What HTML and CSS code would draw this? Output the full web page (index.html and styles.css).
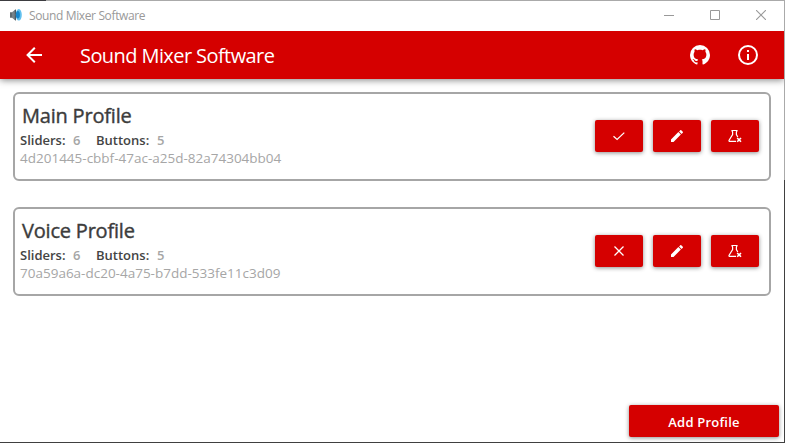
FILE: index.html
```
<!DOCTYPE html>
<html lang="en">
<head>
<meta charset="utf-8">
<title>Sound Mixer Software</title>
<link rel="stylesheet" href="styles.css">
</head>
<body>
<svg width="0" height="0" class="defs">
  <symbol id="check" viewBox="0 0 14 14"><path d="M1.500 7.300 L5.100 10.500 L12.300 3.600" fill="none" stroke="currentColor" stroke-width="1.250"/></symbol>
  <symbol id="close" viewBox="0 0 14 14"><path d="M2.500 2.500l9 9M11.500 2.500l-9 9" stroke="currentColor" stroke-width="1.300"/></symbol>
  <symbol id="pencil" viewBox="0 0 24 24"><path d="M20.710 7.040c.39-.39.39-1.040 0-1.410l-2.340-2.340c-.37-.39-1.020-.39-1.410 0l-1.840 1.830 3.750 3.750M3 17.250V21h3.750L17.810 9.930l-3.750-3.750L3 17.250z" fill="currentColor"/></symbol>
  <symbol id="flask" viewBox="0 0 14 14"><path d="M8 12.400H2q-1.400 0-.9-1.200L4.600 5.500V3L4 1.900v-.4h5v.4L8.400 3v2.500L9.800 8" fill="none" stroke="currentColor" stroke-width="1.200"/><path d="M9.200 9l3.800 3.800M13 9l-3.800 3.800" stroke="currentColor" stroke-width="1.600"/></symbol>
</svg>
<div class="window">
  <div class="titlebar">
    <svg class="logo" width="14" height="14" viewBox="0 0 14 14"><path d="M1 4.200h2v5.600H1z" fill="#606a70"/><path d="M3 4.200 7 1v12L3 9.800z" fill="#76838a"/><path d="M5.800 2H7v10H5.800z" fill="#4b5a63"/><ellipse cx="9.800" cy="6.800" rx="3" ry="5.800" fill="#62c0ee"/><ellipse cx="8.900" cy="6.800" rx="2" ry="3.800" fill="#1686cc"/></svg>
    <span class="caption">Sound Mixer Software</span>
    <div class="controls">
      <svg width="10" height="11" viewBox="0 0 10 11"><path d="M0 5h10" stroke="#999" shape-rendering="crispEdges"/></svg>
      <svg width="10" height="10" viewBox="0 0 10 10"><path d="M.5.5h9v9h-9z" fill="none" stroke="#999"/></svg>
      <svg width="10" height="10" viewBox="0 0 10 10"><path d="M0 0l10 10M10 0L0 10" stroke="#999" stroke-width="1.100"/></svg>
    </div>
  </div>
  <header class="appbar">
    <svg class="back" width="24" height="24" viewBox="0 0 24 24"><path d="M20 11v2H8l5.500 5.500-1.420 1.420L4.160 12l7.920-7.920L13.500 5.500 8 11z" fill="#fff"/></svg>
    <h1>Sound Mixer Software</h1>
    <svg class="github" width="24" height="24" viewBox="0 0 24 24"><path d="M12 2A10 10 0 0 0 2 12c0 4.420 2.870 8.170 6.840 9.500.5.080.66-.23.660-.5v-1.690c-2.770.6-3.360-1.340-3.360-1.340-.46-1.160-1.110-1.470-1.110-1.470-.91-.62.070-.6.070-.6 1 .07 1.530 1.030 1.530 1.030.87 1.520 2.340 1.070 2.910.83.090-.65.350-1.090.63-1.340-2.220-.25-4.550-1.110-4.550-4.920 0-1.110.38-2 1.030-2.710-.1-.25-.45-1.290.1-2.640 0 0 .84-.27 2.750 1.020.79-.22 1.650-.33 2.500-.33s1.710.11 2.500.33c1.910-1.290 2.750-1.020 2.750-1.020.55 1.350.2 2.390.1 2.640.65.710 1.030 1.600 1.030 2.710 0 3.820-2.340 4.660-4.570 4.910.36.310.69.920.69 1.850V21c0 .27.160.59.670.5C19.140 20.160 22 16.420 22 12A10 10 0 0 0 12 2" fill="#fff"/></svg>
    <svg width="24" height="24" viewBox="0 0 24 24"><circle cx="12" cy="12" r="9" fill="none" stroke="#fff" stroke-width="2"/><path d="M11 7h2v2h-2zM11 11h2v6h-2z" fill="#fff"/></svg>
  </header>
  <main>
    <section class="card">
      <div class="info">
        <h2>Main Profile</h2>
        <div class="stats"><b>Sliders:</b><i>6</i><b class="buttons">Buttons:</b><i>5</i></div>
        <div class="uuid">4d201445-cbbf-47ac-a25d-82a74304bb04</div>
      </div>
      <div class="actions">
        <button aria-label="Selected"><svg width="14" height="14"><use href="#check"/></svg></button>
        <button aria-label="Edit"><svg width="16" height="16"><use href="#pencil"/></svg></button>
        <button aria-label="Remove"><svg width="14" height="14"><use href="#flask"/></svg></button>
      </div>
    </section>
    <section class="card">
      <div class="info">
        <h2>Voice Profile</h2>
        <div class="stats"><b>Sliders:</b><i>6</i><b class="buttons">Buttons:</b><i>5</i></div>
        <div class="uuid">70a59a6a-dc20-4a75-b7dd-533fe11c3d09</div>
      </div>
      <div class="actions">
        <button aria-label="Select"><svg width="14" height="14"><use href="#close"/></svg></button>
        <button aria-label="Edit"><svg width="16" height="16"><use href="#pencil"/></svg></button>
        <button aria-label="Remove"><svg width="14" height="14"><use href="#flask"/></svg></button>
      </div>
    </section>
  </main>
  <footer><button class="add">Add Profile</button></footer>
</div>
</body>
</html>
```
FILE: styles.css
```
* { box-sizing: border-box; }
body { margin: 0; font-family: "Open Sans", "Noto Sans", sans-serif; background: #fff; overflow: hidden; }
svg { display: block; flex: none; }
.defs { position: absolute; }
.window {
  width: 785px; height: 443px; display: flex; flex-direction: column;
  padding: 1px 1px 1px 0;
  background:
    linear-gradient(#3c3c40, #3c3c40) 0 0 / 46px 1px no-repeat,
    linear-gradient(#aaa, #aaa) 0 0 / 100% 1px no-repeat,
    linear-gradient(#404040, #404040) 0 100% / 100% 1px no-repeat,
    linear-gradient(#aaa 180px, #404040 180px) 100% 0 / 1px 100% no-repeat,
    #fff;
}
.titlebar { height: 30px; display: flex; align-items: center; padding: 0 18px 0 9px; flex: none; }
.logo { margin-top: -2px; }
.caption { margin-left: 6px; font-size: 12px; line-height: 16px; color: #999; letter-spacing: -.37px; white-space: nowrap; }
.controls { margin-left: auto; display: flex; gap: 36px; align-items: center; height: 10px; margin-top: -2px; }
.appbar {
  height: 48px; flex: none; display: flex; align-items: center; padding: 0 24px 0 22px;
  background: #d50000; box-shadow: 0 1px 7px rgba(0,0,0,.5); clip-path: inset(0 0 -10px 0);
}
h1 { margin: 2px 0 0 34px; font-size: 20px; line-height: 26px; font-weight: 400; color: #fff; letter-spacing: -.58px; white-space: nowrap; }
.github { margin: 0 24px 0 auto; }
main { display: flex; flex-direction: column; gap: 26px; padding: 13px 13px 0; flex: 1; }
.card { height: 89px; border: 2px solid #a6a6a6; border-radius: 6px; display: flex; justify-content: space-between; align-items: center; padding: 0 10px 0 5px; }
.info { align-self: flex-start; padding-top: 8px; white-space: nowrap; }
h2 { margin: 0 0 0 2px; font-size: 20px; line-height: 28px; font-weight: 400; -webkit-text-stroke: .4px #3c3c3c; color: #3c3c3c; letter-spacing: -.2px; }
.stats { height: 18px; display: flex; line-height: 19px; font-size: 13px; margin-top: 1px; }
.stats b { width: 53px; color: #444; font-weight: 600; }
.stats i { width: 24px; color: #a6a6a6; font-style: normal; font-weight: 600; }
.stats .buttons { width: 60px; margin-left: -1px; margin-right: 1px; }
.uuid { font-size: 13.500px; line-height: 18px; color: #a6a6a6; letter-spacing: 0; }
.actions { display: flex; gap: 10px; margin-bottom: 2px; }
button {
  width: 48px; height: 32px; padding: 0; border: 0; border-radius: 2px; background: #d50000; color: #fff;
  display: flex; align-items: center; justify-content: center; font-family: inherit;
  box-shadow: 0 1px 4px rgba(0,0,0,.45);
}
button svg { margin-top: 1px; }
footer { display: flex; justify-content: flex-end; padding: 0 5px 5px; }
.add { width: 150px; font-size: 13px; font-weight: 600; padding-top: 2px; letter-spacing: .2px; }
```
